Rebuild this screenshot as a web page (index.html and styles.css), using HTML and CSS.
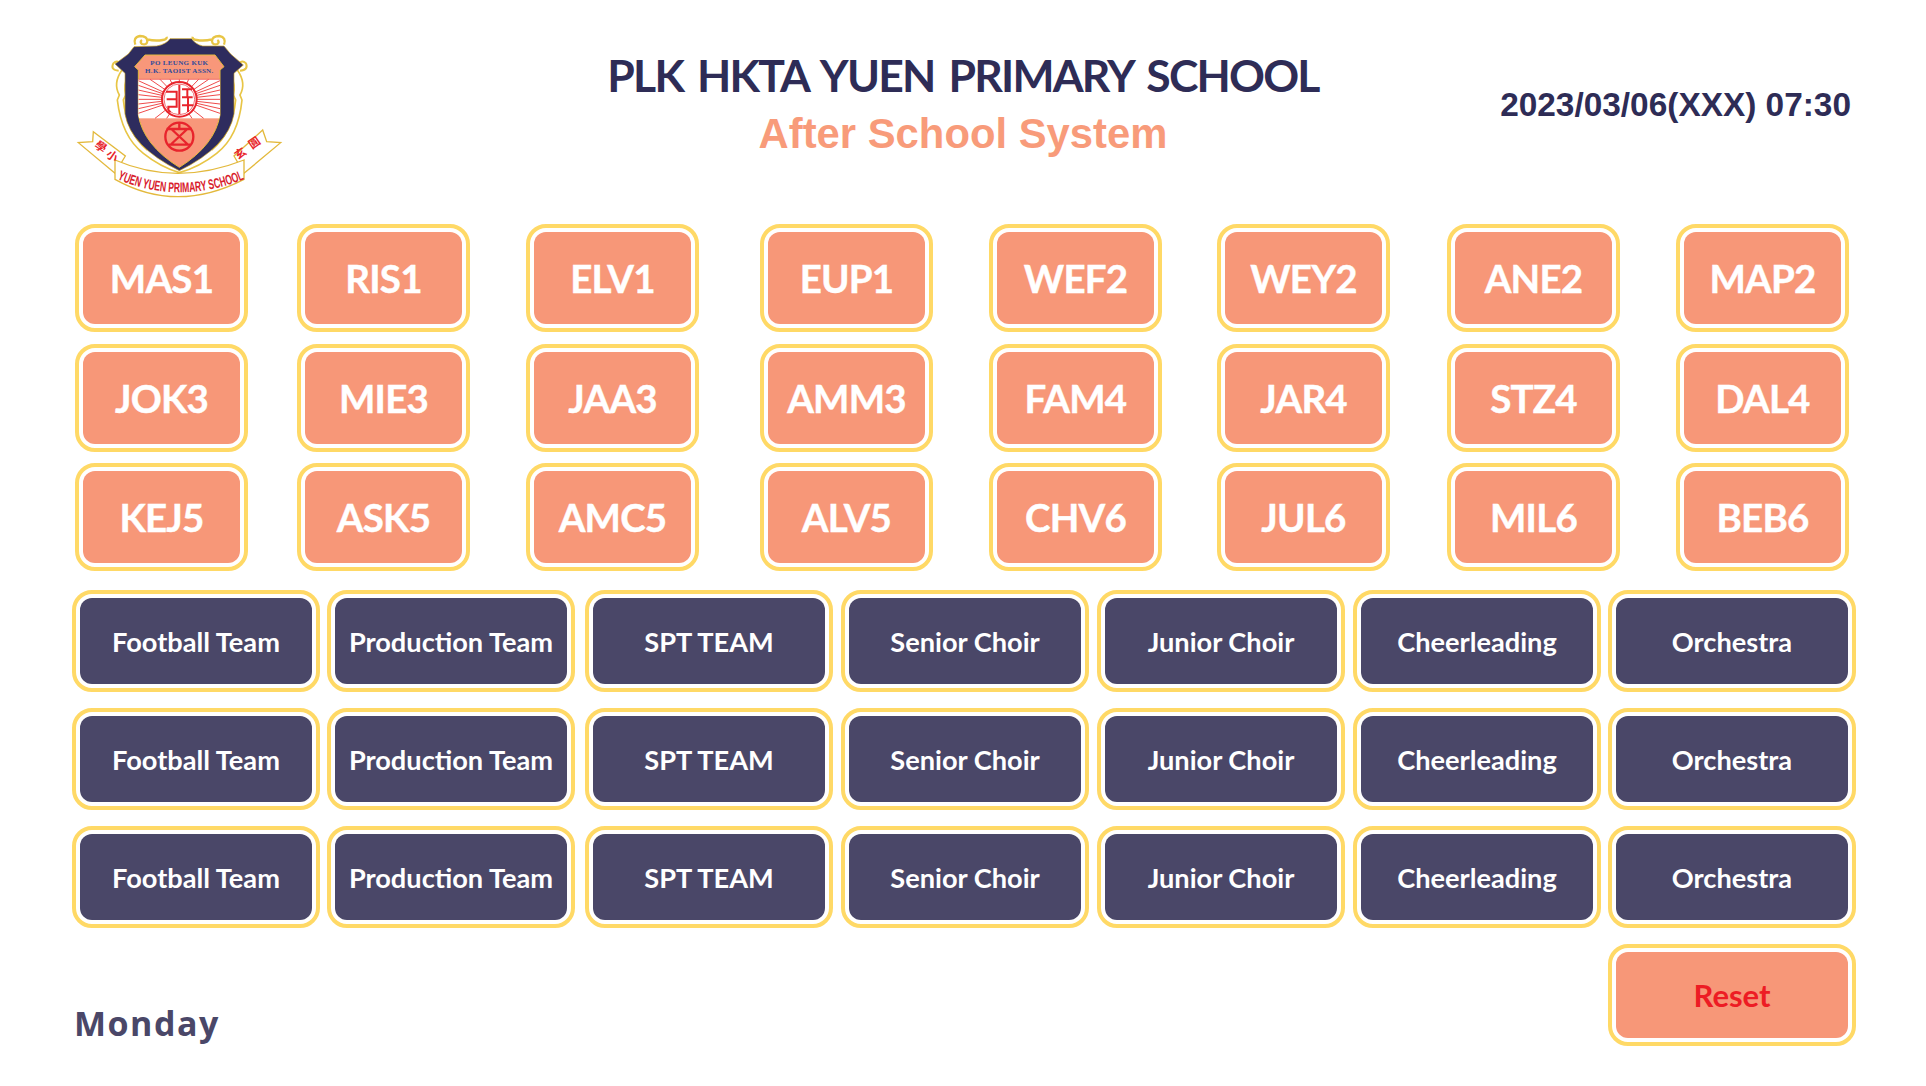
FILE: index.html
```html
<!DOCTYPE html>
<html lang="en">
<head>
<meta charset="utf-8">
<title>After School System</title>
<link rel="stylesheet" href="styles.css">
</head>
<body>
<main class="page">
  <header class="header">
    <svg class="logo" viewBox="0 0 720 570" role="img" aria-label="School crest">
      <defs>
        <path id="ribbon-arc" d="M172,478 Q358,556 552,478"/>
        <clipPath id="panel-clip"><path d="M255,105 L465,105 L492,140 L480,150 L480,285 Q465,375 358,442 Q250,375 235,285 L235,150 L224,140 Z"/></clipPath>
      </defs>
      <path class="gold-line" d="M186,150 Q158,190 178,225 L172,240 Q185,350 250,400 Q300,440 358,458 Q420,440 470,400 Q535,350 546,240 L540,225 Q560,190 532,150"/>
      <path class="gold-line" d="M205,160 Q190,195 197,225 L190,240 Q200,340 262,390"/>
      <path class="gold-line" d="M512,160 Q527,195 520,225 L527,240 Q517,340 455,390"/>
      <path class="gold-curl" d="M176,152 Q150,150 160,130 Q172,118 180,132"/>
      <path class="gold-curl" d="M540,152 Q566,150 558,130 Q546,118 536,132"/>
      <path class="navy" d="M222,80 L290,78 Q320,72 330,56 L395,56 Q405,72 428,78 L492,78 L512,102 L550,135 L522,160 L522,282 Q505,380 358,452 Q212,380 195,282 L195,160 L165,132 L205,102 Z"/>
      <path class="gold-scroll" d="M226,74 Q218,52 240,48 Q262,48 262,64 Q260,76 246,72 Q238,66 246,60 M262,58 Q285,64 308,60 Q322,58 320,50"/>
      <path class="gold-scroll" d="M492,74 Q500,52 478,48 Q456,48 456,64 Q458,76 472,72 Q480,66 472,60 M456,58 Q433,64 410,60 Q396,58 398,50"/>
      <path class="panel" d="M255,105 L465,105 L492,140 L480,150 L480,285 Q465,375 358,442 Q250,375 235,285 L235,150 L224,140 Z"/>
      <g clip-path="url(#panel-clip)">
        <rect class="sun-field" x="225" y="178" width="270" height="117"/>
        <g class="rays">
          <path d="M358,238 L235,182 M358,238 L235,196 M358,238 L235,210 M358,238 L235,224 M358,238 L235,238 M358,238 L235,252 M358,238 L235,266 M358,238 L235,280"/>
          <path d="M358,238 L480,182 M358,238 L480,196 M358,238 L480,210 M358,238 L480,224 M358,238 L480,238 M358,238 L480,252 M358,238 L480,266 M358,238 L480,280"/>
          <path d="M358,238 L270,178 M358,238 L300,178 M358,238 L330,178 M358,238 L358,178 M358,238 L386,178 M358,238 L416,178 M358,238 L446,178"/>
          <path d="M358,238 L285,295 M358,238 L320,295 M358,238 L396,295 M358,238 L431,295"/>
        </g>
        <line class="rule" x1="225" y1="178" x2="495" y2="178"/>
      </g>
      <text class="crest-top" x="358" y="134">PO LEUNG KUK</text>
      <text class="crest-top" x="358" y="160">H.K. TAOIST ASSN.</text>
      <circle class="seal-back" cx="358" cy="238" r="52"/>
      <circle class="seal-ring" cx="358" cy="238" r="46"/>
      <path class="seal-mark" d="M358,194 V282 M318,215 H350 V260 H322 M320,238 H350 M326,262 Q322,272 332,276 M366,208 H396 M366,232 H398 M382,208 V232 M366,256 H400 M384,232 V276"/>
      <circle class="seal-ring-thick" cx="358" cy="350" r="42"/>
      <path class="seal-mark-thick" d="M320,327 H396 M358,310 V327 M334,327 L382,372 M382,327 L334,372 M326,374 H390"/>
      <path class="ribbon" d="M100,335 L196,408 L165,460 L55,368 L98,365 Z"/>
      <path class="ribbon" d="M608,330 L522,408 L552,460 L662,368 L620,365 Z"/>
      <path class="ribbon" d="M165,420 Q350,500 552,420 L552,478 Q350,582 165,478 Z"/>
      <text class="crest-cjk" transform="translate(115,390) rotate(35)">學</text>
      <text class="crest-cjk" transform="translate(150,418) rotate(35)">小</text>
      <text class="crest-cjk" transform="translate(548,410) rotate(-35)">玄</text>
      <text class="crest-cjk" transform="translate(590,378) rotate(-35)">圓</text>
      <text class="crest-name"><textPath href="#ribbon-arc" textLength="392" lengthAdjust="spacingAndGlyphs">YUEN YUEN PRIMARY SCHOOL</textPath></text>
    </svg>
    <div class="titles">
      <h1 class="school">PLK HKTA YUEN PRIMARY SCHOOL</h1>
      <p class="system">After School System</p>
    </div>
    <time class="clock">2023/03/06(XXX) 07:30</time>
  </header>

  <section class="codes">
    <button class="tile code">MAS1</button>
    <button class="tile code">RIS1</button>
    <button class="tile code">ELV1</button>
    <button class="tile code">EUP1</button>
    <button class="tile code">WEF2</button>
    <button class="tile code">WEY2</button>
    <button class="tile code">ANE2</button>
    <button class="tile code">MAP2</button>
    <button class="tile code">JOK3</button>
    <button class="tile code">MIE3</button>
    <button class="tile code">JAA3</button>
    <button class="tile code">AMM3</button>
    <button class="tile code">FAM4</button>
    <button class="tile code">JAR4</button>
    <button class="tile code">STZ4</button>
    <button class="tile code">DAL4</button>
    <button class="tile code">KEJ5</button>
    <button class="tile code">ASK5</button>
    <button class="tile code">AMC5</button>
    <button class="tile code">ALV5</button>
    <button class="tile code">CHV6</button>
    <button class="tile code">JUL6</button>
    <button class="tile code">MIL6</button>
    <button class="tile code">BEB6</button>
  </section>

  <section class="teams">
    <button class="tile team">Football Team</button>
    <button class="tile team">Production Team</button>
    <button class="tile team">SPT TEAM</button>
    <button class="tile team">Senior Choir</button>
    <button class="tile team">Junior Choir</button>
    <button class="tile team">Cheerleading</button>
    <button class="tile team">Orchestra</button>
    <button class="tile team">Football Team</button>
    <button class="tile team">Production Team</button>
    <button class="tile team">SPT TEAM</button>
    <button class="tile team">Senior Choir</button>
    <button class="tile team">Junior Choir</button>
    <button class="tile team">Cheerleading</button>
    <button class="tile team">Orchestra</button>
    <button class="tile team">Football Team</button>
    <button class="tile team">Production Team</button>
    <button class="tile team">SPT TEAM</button>
    <button class="tile team">Senior Choir</button>
    <button class="tile team">Junior Choir</button>
    <button class="tile team">Cheerleading</button>
    <button class="tile team">Orchestra</button>
  </section>

  <footer class="footer">
    <span class="day">Monday</span>
    <button class="tile reset">Reset</button>
  </footer>
</main>
</body>
</html>
```

FILE: styles.css
```css
html, body {
  margin: 0;
  padding: 0;
  background: #fff;
}

.page {
  width: 1926px;
  height: 1086px;
  overflow: hidden;
  padding-top: 20px;
  box-sizing: border-box;
}

.header {
  display: grid;
  grid-template-columns: 1fr auto 1fr;
  align-items: start;
  height: 204px;
  padding: 0 76px;
}

.logo {
  width: 240px;
  height: 190px;
  margin-left: -16px;
}

.titles {
  text-align: center;
}

.school {
  margin: 28px 0 0;
  font: 700 44.5px/54px Lato, "Liberation Sans", sans-serif;
  letter-spacing: -1.8px;
  word-spacing: 5px;
  color: #2e2c56;
}

.system {
  margin: 7px 0 0;
  font: 700 41.8px/50px "Liberation Sans", sans-serif;
  color: #f89b7a;
}

.clock {
  justify-self: end;
  margin-top: 65px;
  margin-right: -1px;
  font: 700 33.4px/40px "Liberation Sans", sans-serif;
  color: #2e2c56;
}

.tile {
  display: block;
  box-sizing: border-box;
  padding: 4px;
  border: 4px solid #ffd966;
  border-radius: 20px;
  background: #f79778 content-box;
  color: #fff;
  font-family: Lato, "Liberation Sans", sans-serif;
  font-weight: 700;
  text-align: center;
}

.codes {
  display: grid;
  grid-template-columns: 222px 229px 234px 229px 228px 230px 229px 173px;
  grid-auto-rows: 108px;
  row-gap: 11.5px;
  margin-left: 75px;
}

.code {
  width: 173px;
  font-size: 38.5px;
  letter-spacing: -0.8px;
  -webkit-text-stroke: 0.4px #fff;
}

.teams {
  display: grid;
  grid-template-columns: 255px 258px 256px 256px 256px 255px 248px;
  grid-auto-rows: 102px;
  row-gap: 16px;
  margin: 19px 0 0 72px;
}

.team {
  width: 248px;
  background-color: #4a4768;
  font-size: 27.2px;
}

.footer {
  display: flex;
  justify-content: space-between;
  align-items: flex-end;
  margin: 16px 70px 0 74px;
}

.day {
  font: 700 34px/46px "Open Sans", sans-serif;
  letter-spacing: 1.5px;
  color: #4a4768;
}

.reset {
  width: 248px;
  height: 102px;
  font-size: 31px;
  color: #ed1c24;
}

/* crest */
.navy { fill: #2e2c5e; stroke: #c9a227; stroke-width: 2; }
.panel { fill: #f8977a; stroke: #e3b93c; stroke-width: 3; }
.sun-field { fill: #fff; }
.rays { fill: none; stroke: #ef4b4b; stroke-width: 3; }
.rule { stroke: #ef4b4b; stroke-width: 2; }
.gold-line { fill: #fff; stroke: #e8c545; stroke-width: 5; }
.gold-curl { fill: #fff; stroke: #e8c545; stroke-width: 6; }
.gold-scroll { fill: none; stroke: #e8c545; stroke-width: 7; }
.ribbon { fill: #fff; stroke: #e3b93c; stroke-width: 4; }
.crest-top {
  font: 700 21px "Liberation Serif", serif;
  letter-spacing: 1px;
  fill: #2f4a9c;
  text-anchor: middle;
}
.seal-back { fill: #fff; stroke: #e8242c; stroke-width: 6; }
.seal-ring { fill: none; stroke: #e8242c; stroke-width: 2; }
.seal-mark { fill: none; stroke: #e8242c; stroke-width: 6; }
.seal-ring-thick { fill: #f8977a; stroke: #e8242c; stroke-width: 7; }
.seal-mark-thick { fill: none; stroke: #e8242c; stroke-width: 7; }
.crest-cjk {
  font: 700 34px "Noto Sans CJK TC", sans-serif;
  fill: #e8242c;
  text-anchor: middle;
}
.crest-name {
  font: 700 42px "Liberation Sans", sans-serif;
  fill: #d8202c;
}
```
